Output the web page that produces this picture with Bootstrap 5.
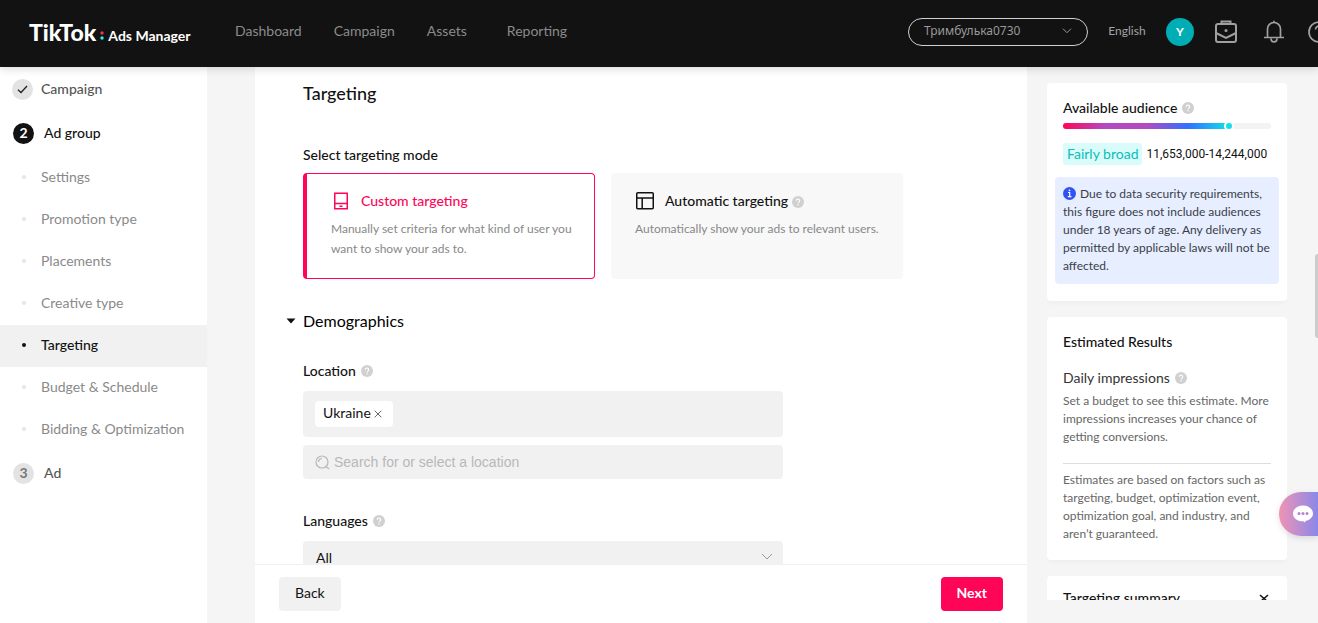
<!DOCTYPE html>
<html lang="en">
<head>
<meta charset="utf-8">
<meta name="viewport" content="width=device-width, initial-scale=1">
<title>TikTok Ads Manager</title>
<link href="https://cdn.jsdelivr.net/npm/bootstrap@5.3.0/dist/css/bootstrap.min.css" rel="stylesheet">
<style>
  body { font-family: Lato, "Liberation Sans", sans-serif; font-size: 14px; line-height: 20px; color: #121212; background: #f5f5f5; }
  button, input, select { font-family: inherit; }
  .medium { font-weight: 500; }

  .topbar { background: #121212; height: 67px; padding-bottom: 4px; box-shadow: 0 2px 8px rgba(0,0,0,.15); z-index: 5; }
  .brand { color: #fff; margin-left: 29px; width: 206px; padding-top: 2px; }
  .brand:hover { color: #fff; }
  .brand-name { font-size: 23px; line-height: 24px; font-weight: 900; }
  .brand-sub { font-size: 14px; font-weight: 700; margin-left: 3px; }
  .topnav { gap: 32px; padding-bottom: 2px; }
  .topnav a { color: #8b8b8b; font-size: 14px; text-decoration: none; }
  .tools { gap: 20px; margin-right: -12px; }
  .account { width: 180px; height: 28px; border: 1px solid #d0d0d0; border-radius: 14px; background: none; color: #999; font: 12px/20px "Noto Sans", sans-serif; padding: 0 15px 2px; }
  .lang { border: 0; background: none; padding: 0 0 2px; min-width: 38px; color: #a3a3a3; font-size: 12px; }
  .avatar { width: 28px; height: 28px; border: 0; background: #00adb5; color: #fff; font-size: 12px; font-weight: 700; }
  .tool { border: 0; background: none; padding: 0; line-height: 0; }
  .tool:last-child { margin-left: 2px; }

  .steps { width: 207px; }
  .step { height: 44px; padding-left: 13px; gap: 10px; color: #555; text-decoration: none; font-weight: 500; font-size: 14px; }
  .step.done { padding-left: 12px; gap: 8px; }
  .step.current { color: #121212; }
  .step-no { width: 21px; height: 21px; background: #e3e3e3; color: #777; font-weight: 700; }
  .current .step-no { background: #121212; color: #fff; }
  .substeps { margin-top: 2px; }
  .substeps a { height: 42px; padding: 0 0 2px 22px; gap: 15px; color: #8a8a8a; text-decoration: none; }
  .substeps a::before { content: ""; width: 4px; height: 4px; border-radius: 50%; background: #e6e6e6; }
  .substeps a.active { background: #f1f1f1; color: #121212; font-weight: 500; }
  .substeps a.active::before { background: #121212; }

  .editor { margin-left: 48px; margin-right: 20px; }
  .form-area { padding: 14px 48px 0; }
  .page-title { font-size: 18px; line-height: 24px; font-weight: 500; margin: 0 0 40px; }
  .modes { gap: 16px; margin-top: 8px; }
  .mode { width: 292px; height: 106px; border: 0; border-radius: 4px; background: #f8f8f8; padding: 18px 8px 18px 24px; text-align: left; }
  .mode.selected { background: #fff; border: 1px solid #fe0557; border-left-width: 4px; padding: 17px 8px 17px 24px; }
  .mode.selected .mode-title { color: #fe0557; }
  .mode-title { font-size: 14px; gap: 10px; margin-bottom: 8px; color: #121212; font-weight: 500; }
  .mode-text { font-size: 12px; color: #888; display: block; max-width: 250px; }
  .section-toggle { border: 0; background: none; padding: 0; margin: 30px 0 28px -17px; font-size: 16px; line-height: 24px; gap: 7px; }
  .field { width: 480px; }
  .field-head { gap: 5px; margin-bottom: 10px; font-weight: 500; }
  .chips { background: #f1f1f1; border-radius: 4px; padding: 10px 12px; }
  .chip { background: #fff; border-radius: 4px; height: 26px; padding: 0 11px 2px 8px; gap: 3px; }
  .chip button { border: 0; background: none; padding: 2px 0 0; line-height: 0; }
  .search { background: #f1f1f1; border-radius: 4px; height: 34px; padding: 0 12px; gap: 4px; margin: 8px 0 32px; }
  .search input { border: 0; background: none; outline: 0; padding: 0; font: 14px/20px "Liberation Sans", Arial, sans-serif; }
  .search input::placeholder { color: #b8b8b8; opacity: 1; }
  .pick select { appearance: none; border: 0; border-radius: 4px; background: #f1f1f1; height: 34px; padding: 0 13px; color: #121212; }
  .pick svg { right: 10px; top: 12px; pointer-events: none; }
  .actions { border-top: 1px solid #f0f0f0; padding: 12px 24px; }
  .actions button { height: 34px; padding: 0 16px 2px; border: 0; border-radius: 4px; background: #f1f1f1; color: #121212; }
  .actions .go { background: #fe0557; color: #fff; font-weight: 700; }

  .aside-col { width: 240px; margin: 0 31px 23px 0; padding-top: 16px; gap: 16px; }
  .panel { background: #fff; border-radius: 4px; padding: 16px 16px 17px; box-shadow: 0 2px 4px rgba(0,0,0,.03); font-size: 12px; line-height: 18px; color: #666; flex: none; }
  .panel h2 { font-size: 14px; line-height: 18px; font-weight: 500; color: #121212; margin: 0; }
  .head-row { gap: 5px; }
  .meter { height: 6px; border-radius: 3px; background: #f3f3f3; margin: 6px 0 14px; }
  .meter-fill { height: 6px; border-radius: 3px; background: linear-gradient(90deg, #fe0557, #b44ac0 25%, #b44ac0 50%, #3370ff 75%, #11e0ea); box-shadow: 0 8px 8px -4px rgba(180,74,192,.12); }
  .meter-fill::after { content: ""; position: absolute; right: -5px; top: -2px; width: 10px; height: 10px; border: 2px solid #fff; border-radius: 50%; background: #11e0ea; }
  .tag { background: #d9fcfa; color: #0cbdb9; border-radius: 3px; font-size: 14px; line-height: 22px; padding: 0 4px; }
  .range { color: #121212; font-family: Roboto, sans-serif; font-size: 12px; }
  .notice { background: #e7eeff; color: #3a3d47; border-radius: 4px; padding: 8px 8px 9px; margin: 12px -8px 0; }
  .notice svg { margin: -2px 4px 0 0; }
  .daily { font-size: 14px; color: #333; margin: 18px 0 5px; }
  .rule { border-top: 1px solid #ddd; margin-top: 17px; padding-top: 7px; }
  .summary { padding: 13px 16px; }

  .thumb { right: 0; top: 254px; width: 3px; height: 84px; background: #ccc; border-radius: 3px 0 0 3px; }
  .chat { right: 0; bottom: 87px; width: 39px; height: 44px; border: 0; border-radius: 22px 0 0 22px; padding: 0 0 0 13px; background: linear-gradient(90deg, #f093b4, #8a88ea); box-shadow: 0 2px 6px rgba(0,0,0,.12); z-index: 6; line-height: 0; }
</style>
</head>
<body class="vh-100 overflow-hidden d-flex flex-column position-relative">

<svg class="d-none" aria-hidden="true">
  <symbol id="help" viewBox="0 0 12 12">
    <circle cx="6" cy="6" r="6" fill="#d0d0d0"/>
    <path d="M4.3 4.7a1.7 1.7 0 1 1 2.6 1.4c-.6.4-.9.6-.9 1.1" fill="none" stroke="#fff" stroke-width="1.1"/>
    <circle cx="6" cy="8.8" r=".7" fill="#fff"/>
  </symbol>
</svg>

<header class="topbar d-flex align-items-center flex-shrink-0 position-relative">
  <a href="#" class="brand d-flex align-items-baseline text-decoration-none flex-shrink-0">
    <span class="brand-name">TikTok</span>
    <svg width="5" height="11" viewBox="0 0 5 11" class="ms-1" aria-hidden="true"><circle cx="2" cy="3" r="1.7" fill="#fe2c55"/><circle cx="2" cy="8" r="1.7" fill="#25f4ee"/></svg>
    <span class="brand-sub">Ads Manager</span>
  </a>
  <nav class="topnav d-flex">
    <a href="#">Dashboard</a><a href="#">Campaign</a><a href="#">Assets</a><a href="#" class="ms-2">Reporting</a>
  </nav>
  <div class="tools d-flex align-items-center ms-auto flex-shrink-0">
    <button type="button" class="account d-flex align-items-center justify-content-between">Тримбулька0730
      <svg width="10" height="6" viewBox="0 0 10 6" fill="none" stroke="#999"><path d="M1 .7l4 4 4-4"/></svg>
    </button>
    <button type="button" class="lang">English</button>
    <button type="button" class="avatar rounded-circle p-0">Y</button>
    <button type="button" class="tool" aria-label="Business center">
      <svg width="24" height="24" viewBox="0 0 24 24" fill="none" stroke="#a0a0a0" stroke-width="2"><rect x="2" y="4" width="20" height="18" rx="2"/><path d="M7.500 4V1.500h9V4M2 13l10 5 10-5"/><circle cx="12" cy="10.500" r="1.500" fill="#a0a0a0" stroke="none"/></svg>
    </button>
    <button type="button" class="tool ms-1" aria-label="Notifications">
      <svg width="24" height="24" viewBox="0 0 24 24" fill="none" stroke="#a0a0a0" stroke-width="1.700"><path d="M2 17.500h20M5.500 17.500V9a6.500 6.500 0 0 1 13 0v8.500M9 18.500a3 3.400 0 0 0 6 0M12 .8v2"/></svg>
    </button>
    <button type="button" class="tool" aria-label="Help">
      <svg width="22" height="22" viewBox="0 0 22 22" fill="none" stroke="#a0a0a0" stroke-width="1.700"><circle cx="11" cy="11" r="10"/><path d="M7.500 8.500a3.500 3.500 0 1 1 5.500 3c-1.400.9-2 1.300-2 2.500M11 15.500v1.500"/></svg>
    </button>
  </div>
</header>

<div class="d-flex flex-grow-1 overflow-hidden">
  <nav class="steps bg-white flex-shrink-0" aria-label="Steps">
    <a href="#" class="step done d-flex align-items-center"><span class="step-no rounded-circle d-flex align-items-center justify-content-center"><svg width="11" height="9" viewBox="0 0 11 9" fill="none" stroke="#222" stroke-width="1.300"><path d="M1 4.800l3 2.700L10 1"/></svg></span>Campaign</a>
    <a href="#" class="step current d-flex align-items-center"><span class="step-no rounded-circle d-flex align-items-center justify-content-center">2</span>Ad group</a>
    <div class="substeps">
      <a href="#" class="d-flex align-items-center">Settings</a>
      <a href="#" class="d-flex align-items-center">Promotion type</a>
      <a href="#" class="d-flex align-items-center">Placements</a>
      <a href="#" class="d-flex align-items-center">Creative type</a>
      <a href="#" class="d-flex align-items-center active">Targeting</a>
      <a href="#" class="d-flex align-items-center">Budget &amp; Schedule</a>
      <a href="#" class="d-flex align-items-center">Bidding &amp; Optimization</a>
    </div>
    <a href="#" class="step d-flex align-items-center"><span class="step-no rounded-circle d-flex align-items-center justify-content-center">3</span>Ad</a>
  </nav>

  <main class="editor bg-white flex-fill d-flex flex-column overflow-hidden">
    <div class="form-area flex-fill overflow-hidden">
      <h1 class="page-title">Targeting</h1>
      <div class="medium">Select targeting mode</div>
      <div class="modes d-flex">
        <button type="button" class="mode selected d-flex flex-column">
          <span class="mode-title d-flex align-items-center">
            <svg width="20" height="20" viewBox="0 0 20 20" fill="none" stroke="#fe0557" stroke-width="1.500"><rect x="3.750" y="2.250" width="12.500" height="15.500"/><path d="M4 12.500h12M8.500 15.200h3"/></svg>
            Custom targeting</span>
          <span class="mode-text">Manually set criteria for what kind of user you want to show your ads to.</span>
        </button>
        <button type="button" class="mode d-flex flex-column">
          <span class="mode-title d-flex align-items-center">
            <svg width="20" height="20" viewBox="0 0 20 20" fill="none" stroke="#121212" stroke-width="1.500"><rect x="1.750" y="1.750" width="16.500" height="16" rx="1"/><path d="M2 7h16M7.200 7v10.500"/></svg>
            <span>Automatic targeting <svg width="12" height="12" aria-label="Help"><use href="#help"/></svg></span></span>
          <span class="mode-text">Automatically show your ads to relevant users.</span>
        </button>
      </div>

      <button type="button" class="section-toggle d-flex align-items-center"><svg width="10" height="6" viewBox="0 0 10 6"><path d="M.5.500h9L5 5.500z" fill="#121212"/></svg>Demographics</button>

      <div class="field mw-100">
        <div class="field-head d-flex align-items-center"><label for="loc">Location</label><svg width="12" height="12" aria-label="Help"><use href="#help"/></svg></div>
        <div class="chips d-flex">
          <span class="chip d-flex align-items-center">Ukraine <button type="button" aria-label="Remove Ukraine"><svg width="8" height="8" viewBox="0 0 8 8" stroke="#666"><path d="M.7.700l6.600 6.600M7.300.700L.7 7.300"/></svg></button></span>
        </div>
        <div class="search d-flex align-items-center">
          <svg width="15" height="15" viewBox="0 0 15 15" fill="none" stroke="#b8b8b8" stroke-width="1.200"><circle cx="7" cy="7" r="6"/><path d="M11 11.500l3 2.500M3.500 7A3.500 3.500 0 0 1 7 3.500"/></svg>
          <input id="loc" type="text" class="flex-fill" placeholder="Search for or select a location">
        </div>
        <div class="field-head d-flex align-items-center"><label for="lng">Languages</label><svg width="12" height="12" aria-label="Help"><use href="#help"/></svg></div>
        <div class="pick position-relative">
          <select id="lng" class="w-100"><option>All</option></select>
          <svg class="position-absolute" width="12" height="8" viewBox="0 0 12 8" fill="none" stroke="#999"><path d="M1 1l5 5 5-5"/></svg>
        </div>
      </div>
    </div>
    <div class="actions d-flex justify-content-between flex-shrink-0">
      <button type="button">Back</button>
      <button type="button" class="go">Next</button>
    </div>
  </main>

  <aside class="aside-col flex-shrink-0 d-flex flex-column overflow-hidden">
    <section class="panel">
      <div class="head-row d-flex align-items-center"><h2>Available audience</h2><svg width="12" height="12" aria-label="Help"><use href="#help"/></svg></div>
      <div class="meter"><div class="meter-fill position-relative" style="width:80%"></div></div>
      <div class="d-flex align-items-center gap-1 text-nowrap"><span class="tag">Fairly broad</span><span class="range">11,653,000-14,244,000</span></div>
      <div class="notice"><svg width="13" height="13" viewBox="0 0 13 13"><circle cx="6.500" cy="6.500" r="6.500" fill="#3153f5"/><path d="M5 5.500h1.700v4M4.800 9.700h3.600" fill="none" stroke="#fff" stroke-width="1.200"/><circle cx="6.500" cy="3.300" r=".9" fill="#fff"/></svg>Due to data security requirements, this figure does not include audiences under 18 years of age. Any delivery as permitted by applicable laws will not be affected.</div>
    </section>
    <section class="panel">
      <h2>Estimated Results</h2>
      <div class="daily head-row d-flex align-items-center">Daily impressions<svg width="12" height="12" aria-label="Help"><use href="#help"/></svg></div>
      <div>Set a budget to see this estimate. More impressions increases your chance of getting conversions.</div>
      <div class="rule">Estimates are based on factors such as targeting, budget, optimization event, optimization goal, and industry, and aren’t guaranteed.</div>
    </section>
    <section class="panel summary">
      <div class="d-flex align-items-center justify-content-between"><h2>Targeting summary</h2><svg width="14" height="8" viewBox="0 0 14 8" fill="none" stroke="#121212" stroke-width="1.500"><path d="M3 1l4 3.500L11 1M3 8l4-3.500L11 8"/></svg></div>
    </section>
  </aside>
</div>

<div class="thumb position-absolute"></div>
<button type="button" class="chat position-absolute text-start" aria-label="Chat">
  <svg width="22" height="18" viewBox="0 0 22 18"><path d="M11 .5c5.500 0 10 3.300 10 8 0 4-3.500 6.500-7 7.300l-1.500 1.700-1-1.200C5 16.500 1 13 1 8.500c0-4.700 4.500-8 10-8z" fill="#fff"/><g fill="#b384d0"><circle cx="7" cy="8.500" r="1.500"/><circle cx="11" cy="8.500" r="1.500"/><circle cx="15" cy="8.500" r="1.500"/></g></svg>
</button>

<script src="https://cdn.jsdelivr.net/npm/bootstrap@5.3.0/dist/js/bootstrap.bundle.min.js"></script>
</body>
</html>
